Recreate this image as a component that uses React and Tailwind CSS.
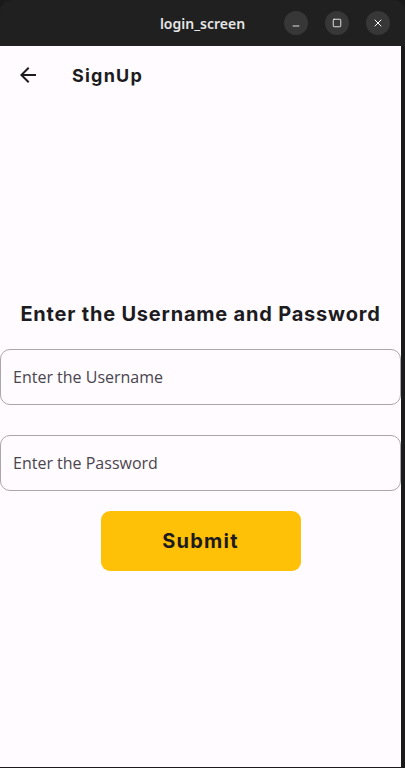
import { X, Minus, Square } from 'lucide-react';

export default function App() {
  return (
    <div className="w-[405px] h-[768px] bg-[#1a1a1a] flex flex-col overflow-hidden">
      {/* Window title bar */}
      <div className="h-[46px] bg-[#202020] rounded-t-[12px] flex items-center relative shrink-0">
        <div className="absolute left-0 right-0 text-center text-[14px] font-semibold text-[#e6e6e6] font-['Noto_Sans',sans-serif]">
          login_screen
        </div>
        <div className="ml-auto mr-[15px] flex items-center gap-[17px] relative">
          <div className="w-[24px] h-[24px] rounded-full bg-[#373737] flex items-center justify-center">
            <Minus className="w-[10px] h-[10px] text-white translate-y-[3px]" strokeWidth={2} />
          </div>
          <div className="w-[24px] h-[24px] rounded-full bg-[#373737] flex items-center justify-center">
            <Square className="w-[10px] h-[10px] text-white" strokeWidth={2} />
          </div>
          <div className="w-[24px] h-[24px] rounded-full bg-[#373737] flex items-center justify-center">
            <X className="w-[12px] h-[12px] text-white" strokeWidth={2} />
          </div>
        </div>
      </div>

      {/* App content */}
      <div className="flex flex-1 min-h-0">
        <div className="w-[401px] h-[721px] bg-[#fffbfe] flex flex-col">
          {/* App bar */}
          <div className="h-[56px] flex items-center shrink-0 pt-[2px]">
            <div className="w-[56px] flex items-center justify-center">
              <svg width="24" height="24" viewBox="0 0 24 24" className="text-[#1c1b1f]">
                <path fill="currentColor" d="M20 11H7.83l5.59-5.59L12 4l-8 8 8 8 1.41-1.41L7.83 13H20v-2z" />
              </svg>
            </div>
            <div className="ml-[16px] text-[18px] font-bold text-[#1c1b1f] font-['Inter',sans-serif] tracking-[1.2px]">
              SignUp
            </div>
          </div>

          {/* Body */}
          <div className="flex-1 flex flex-col justify-center">
            <div className="text-center text-[20px] font-bold text-[#1c1b1f] font-['Inter',sans-serif] tracking-[0.8px] mb-[20px]">
              Enter the Username and Password
            </div>
            <div className="h-[56px] border border-[#aaa5ae] rounded-[10px] flex items-center px-[12px] text-[16px] text-[#49454f] font-['Open_Sans',sans-serif]">
              Enter the Username
            </div>
            <div className="h-[30px]" />
            <div className="h-[56px] border border-[#aaa5ae] rounded-[10px] flex items-center px-[12px] text-[16px] text-[#49454f] font-['Open_Sans',sans-serif]">
              Enter the Password
            </div>
            <div className="flex justify-center mt-[20px]">
              <button className="w-[200px] h-[60px] bg-[#ffc107] rounded-[9px] text-[20px] font-bold text-[#1c1b1f] font-['Inter',sans-serif] tracking-[1.2px]">
                Submit
              </button>
            </div>
          </div>
        </div>
        <div className="flex-1 bg-[#1a1a1a]" />
      </div>
    </div>
  );
}
